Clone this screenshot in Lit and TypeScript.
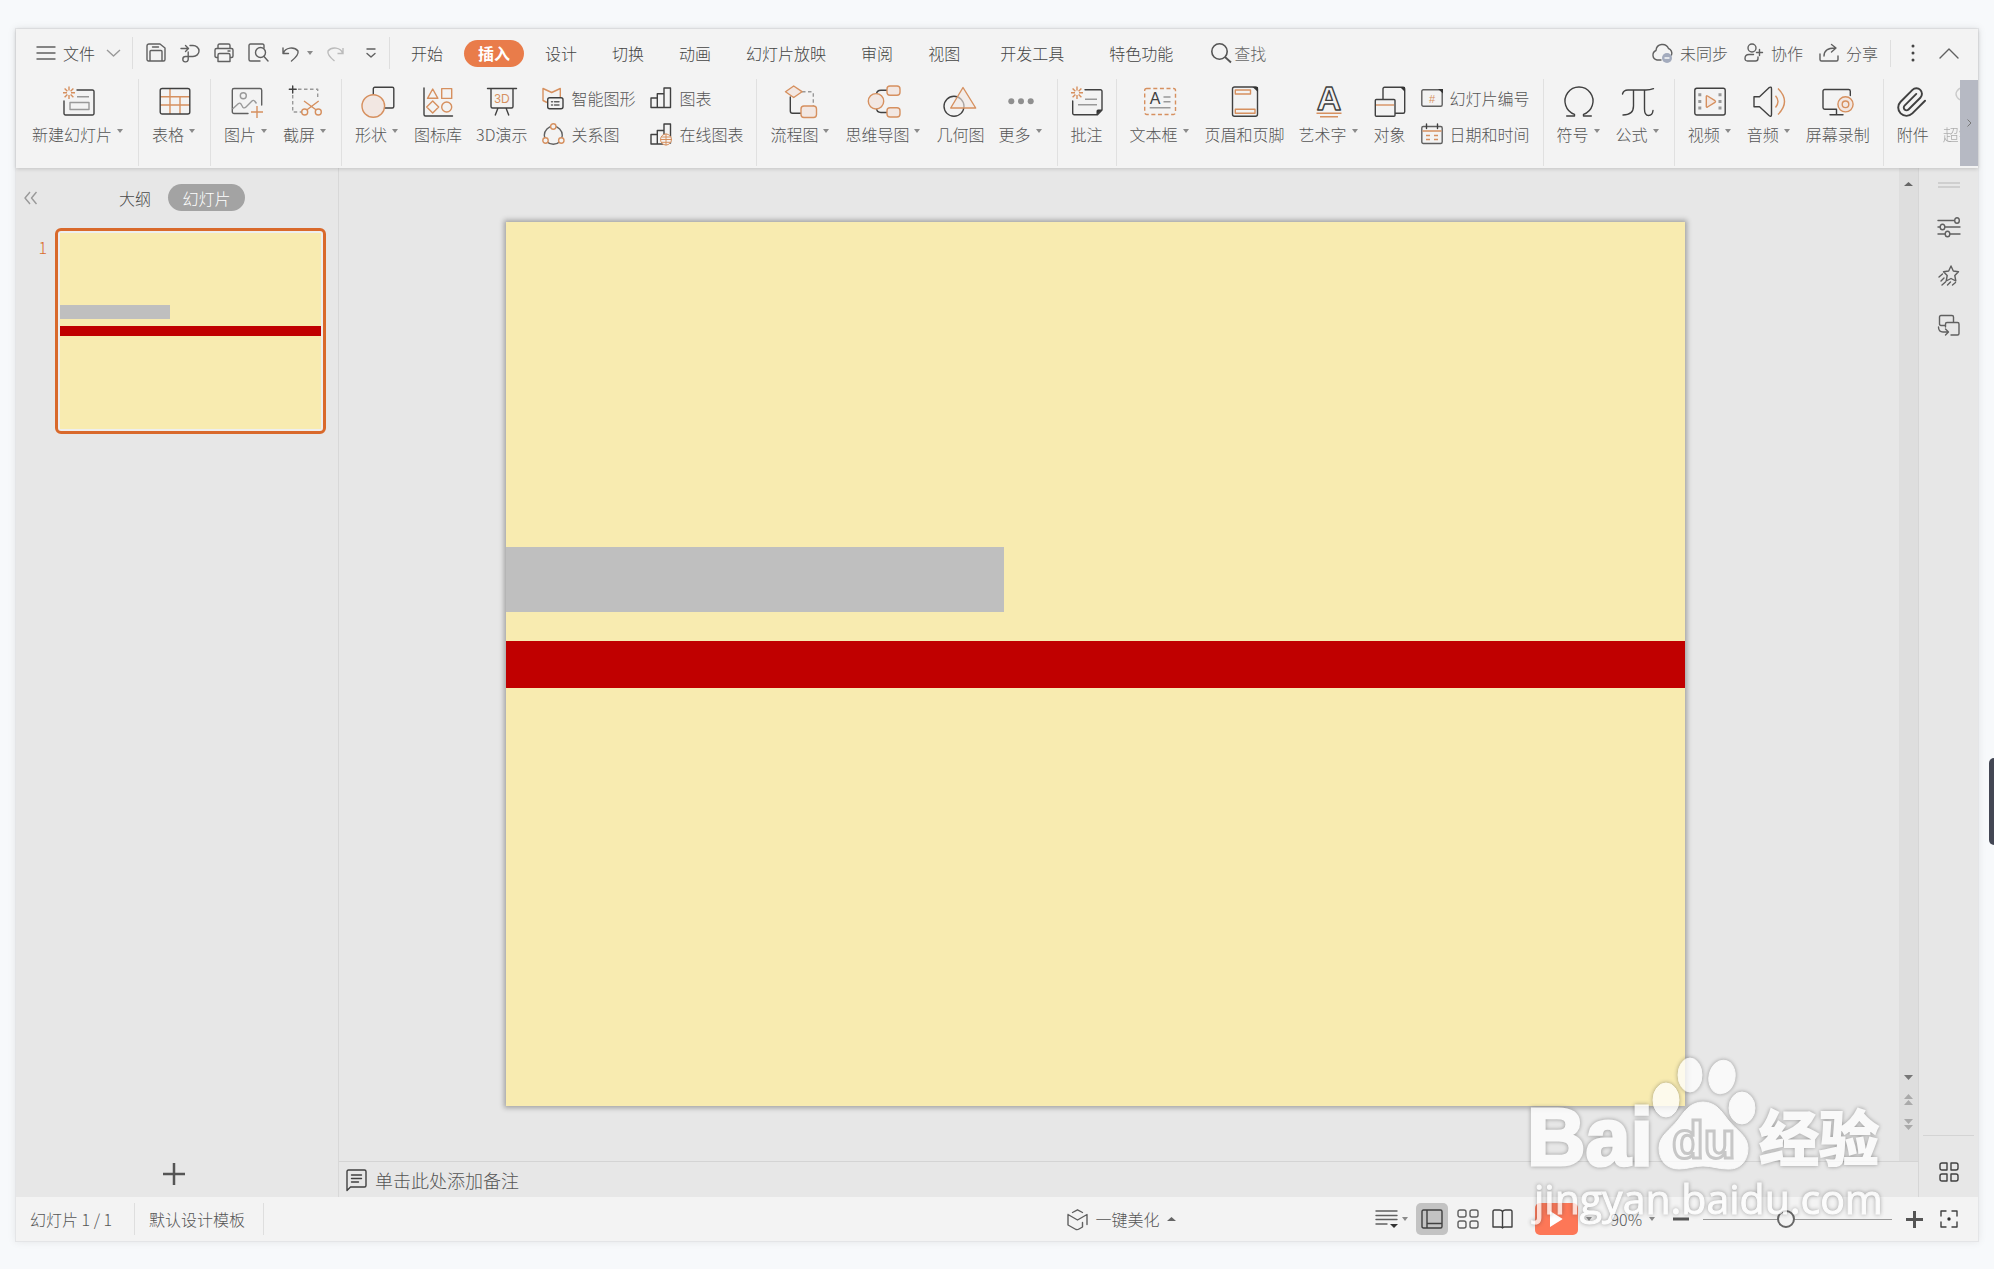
import { LitElement, html, svg, css, nothing } from "lit";
import { customElement, state } from "lit/decorators.js";
import { classMap } from "lit/directives/class-map.js";
import { styleMap } from "lit/directives/style-map.js";

interface Tool {
  icon: string;
  label: string;
  menu?: boolean;
  faded?: boolean;
}
type Entry = Tool | Tool[];

const burst = svg`<path class="o" d="M6 0.5v4M6 9v4M0 6.7h4M8 6.7h4M1.6 2.4l2.8 2.8M7.6 8.4l2.8 2.8M10.4 2.4L7.6 5.2M4.4 8.4l-2.8 2.8"/>`;

const icons: Record<string, unknown> = {
  newSlide: svg`<path class="d" d="M14 4H29.5A1.5 1.5 0 0 1 31 5.500V27.500A1.500 1.500 0 0 1 29.500 29H2.500A1.500 1.500 0 0 1 1 27.500V15"/><path class="g" d="M14 10.700H26M7 16.500H26V23.500H7Z"/>${burst}`,
  table: svg`<path class="o" d="M11 3V28M21 11V28M1 10.700H31M1 19H31"/><rect class="d" x="1.200" y="2.500" width="29.600" height="25.500" rx="2"/>`,
  picture: svg`<path class="s" d="M17 27.500H3A1.700 1.700 0 0 1 1.300 25.800V4.200A1.700 1.700 0 0 1 3 2.500H29A1.700 1.700 0 0 1 30.700 4.200V19"/><circle class="g" cx="12.300" cy="9.700" r="3"/><path class="g" d="M1.500 23L7.500 17.500Q9 16.500 10 18L12 21.500Q13.500 22.500 15 21L21 15Q22.500 13.500 24 15.500L25.500 17.500"/><path class="o" d="M26 20v12M20 26H32"/>`,
  screenshot: svg`<path class="g" stroke-dasharray="3.500 2.500" d="M8 3.300H27.700V13M2.700 9V26H12"/><path class="d" d="M2.700 0V7M-.700 3.300H6.200"/><g class="o"><circle cx="14.700" cy="26" r="3"/><circle cx="28.300" cy="26" r="3"/><path d="M14 15L26.300 24M28.700 15L16.700 24"/></g>`,
  shape: svg`<rect class="d" x="11.300" y="1.300" width="20.500" height="20.700" rx="1.500"/><circle class="of" cx="11.300" cy="20" r="11.300"/>`,
  library: svg`<path class="d" d="M2 2V28.500Q2 30 3.500 30H30.500"/><path class="o" d="M10.700 3L5.500 12.300H15.900ZM19.700 2.600H29.700V12.400H19.700ZM10.700 15L16.700 21L10.700 27L4.700 21Z"/><circle class="o" cx="24.700" cy="21" r="5"/>`,
  three: svg`<path class="d" d="M1.500 2.500H30.500M5 2.500V20.500Q5 22 6.500 22H25.500Q27 22 27 20.500V2.500M12 22L9.300 29M20 22L22.700 29"/><text class="ot" x="16" y="16.500" font-size="12">3D</text>`,
  smart: svg`<path class="o" d="M5 15.500L1 13.500V1.500L9.700 5.500L18.300 1.500V10"/><rect class="db" x="5.700" y="10.700" width="15.300" height="11" rx="2"/><path class="s" d="M9.500 14.700h1M12.500 14.700h4.500M9.500 18h1M12.500 18h4.500"/>`,
  relation: svg`<circle class="s" cx="11.300" cy="12.300" r="9"/><g class="ob"><circle cx="11.300" cy="3.500" r="2.700"/><circle cx="3.500" cy="17.500" r="2.700"/><circle cx="19.300" cy="17.500" r="2.700"/></g>`,
  chart: svg`<path class="d" d="M1 11H7.300V20.500H1ZM7.300 6.700H14V20.500H7.300ZM14 1H20.500V20.500H14Z"/>`,
  online: svg`<path class="d" d="M1 11.500H7.300V21H1ZM7.300 7.500H14V21H7.300ZM14 1H20.500V20H14Z"/><g class="ob thin"><circle cx="16" cy="16.500" r="5.500"/><path d="M10.500 16.500H21.500M16 11V22M11.500 14H20.500M11.500 19.300H20.500"/></g>`,
  flow: svg`<path class="g" stroke-dasharray="3.500 2.500" d="M17 5.700H27Q28.300 5.700 28.300 7V20"/><path class="d" d="M5.300 11V25Q5.300 27.300 7.500 27.300H16"/><path class="of" d="M8.700 0L17 5.700L8.700 11.500L.5 5.700Z"/><rect class="of" x="16" y="20" width="15.500" height="11.500" rx="3"/>`,
  mind: svg`<path class="d" d="M8.500 8.500Q8.500 4.300 13 4.300H19.500M8.500 22Q8.500 26.500 13 26.500H19.500"/><circle class="of" cx="8" cy="15.300" r="7.700"/><rect class="of" x="19" y="0" width="13" height="9.300" rx="3"/><rect class="of" x="19" y="21.700" width="13" height="9.300" rx="3"/>`,
  geometry: svg`<circle class="d" cx="10" cy="20.300" r="10"/><path class="of" fill-opacity=".6" d="M19 1.500L6.700 22H31.700Z"/>`,
  more: svg`<g fill="#8f8f8f"><circle cx="6.300" cy="15.300" r="3"/><circle cx="16" cy="15.300" r="3"/><circle cx="25.700" cy="15.300" r="3"/></g>`,
  comment: svg`<path class="d" d="M14 3.700H29.500A1.500 1.500 0 0 1 31 5.200V24L26.500 28.700H3.200A1.500 1.500 0 0 1 1.700 27.200V15"/><path class="k" d="M31 23.500H27A1.500 1.500 0 0 0 25.500 25V29Z"/><path class="g" d="M14 13.300H26M7 18.700H26"/>${burst}`,
  textbox: svg`<rect class="o" stroke-dasharray="4 2.600" x=".700" y="2.500" width="30.800" height="26" rx="2"/><text class="dt" x="11" y="17.500" font-size="16">A</text><path class="g" d="M19.500 11H26.500M19.500 15.700H26.500M5.700 21.700H26.500"/>`,
  header: svg`<rect class="d" x="3.500" y="1" width="25" height="29.300" rx="2"/><path class="k" d="M23.500 1L29 6V1Z"/><path class="o" d="M6.300 4H21.500V8H6.300ZM6.300 23.300H26V27.300H6.300Z"/>`,
  wordart: svg`<text class="outlined" x="16" y="24" font-size="34">A</text><path class="o" d="M3.500 27.300H28.500M7 30.700H25"/>`,
  object: svg`<rect class="d" x="9" y="1.200" width="21.700" height="26" rx="1.500"/><path class="k" d="M26 1L31 6V1Z"/><rect class="db" x="1.300" y="13.500" width="19.700" height="16.800" rx="1"/><path class="o" d="M2 19H20"/>`,
  number: svg`<rect class="s" x=".800" y="2.800" width="20.400" height="16.500" rx="1.500"/><path class="k" d="M17 2L22 6.500V2Z"/><text class="ot" x="11" y="15.500" font-size="11">#</text>`,
  date: svg`<rect class="s" x=".800" y="3.500" width="20.400" height="17" rx="1.500"/><path class="d" d="M5.500 1V5.500M16.500 1V5.500"/><path class="o" d="M1.500 8H20.500M5 12.500h4M13 12.500h4M5 16.500h4M13 16.500h4"/>`,
  omega: svg`<path class="d" d="M3.700 30H11.500V28.300A14 14 0 1 1 20.500 28.300V30H28.300"/>`,
  pi: svg`<path class="d" d="M.5 8Q1.500 4 6 4H24Q28 4 31.500 2.700M11.500 4V20Q11.500 29 1 29M22.500 4V23Q22.500 29.500 26.500 29.500T31 24.500"/>`,
  video: svg`<rect class="d" x=".800" y="2.300" width="30.400" height="26.700" rx="2"/><path class="g" stroke-width="3" stroke-dasharray="3 3.700" d="M5.800 7.200V24M26 7.200V24"/><path class="of" d="M12.300 10.500Q12.300 9.300 13.500 10L21 14.700Q22 15.500 21 16.300L13.500 21Q12.300 21.600 12.300 20.500Z"/>`,
  audio: svg`<path class="d" d="M1 10.700H6.500L16 1.700Q18.500 0 18.500 3V28.500Q18.500 31.500 16 29.500L6.500 20.700H1Z"/><path class="o" d="M22.500 9.700Q27.500 15.500 22.500 21.500M25 2.500Q38 15.500 25 28.500"/>`,
  record: svg`<path class="d" d="M14 23.300H2.700A1.700 1.700 0 0 1 1 21.600V5.200A1.700 1.700 0 0 1 2.700 3.500H26.600A1.700 1.700 0 0 1 28.300 5.200V9.500M14.500 23.300V28.700M8 28.700H21"/><circle class="of" cx="23.500" cy="18.300" r="7.600"/><circle class="o" cx="23.500" cy="18.300" r="3.300"/>`,
  clip: svg`<path class="d" transform="translate(-1.500 -.5) scale(1.380)" d="M21.400 11.050l-9.190 9.190a6 6 0 0 1-8.490-8.490l8.570-8.570A4 4 0 1 1 18 8.840l-8.590 8.570a2 2 0 0 1-2.830-2.830l8.490-8.480"/>`,
  link: svg`<path class="g" d="M9 2Q1 8 9 14"/>`,
};

const groups: Entry[][] = [
  [{ icon: "newSlide", label: "新建幻灯片", menu: true }],
  [{ icon: "table", label: "表格", menu: true }],
  [
    { icon: "picture", label: "图片", menu: true },
    { icon: "screenshot", label: "截屏", menu: true },
  ],
  [
    { icon: "shape", label: "形状", menu: true },
    { icon: "library", label: "图标库" },
    { icon: "three", label: "3D演示" },
    [
      { icon: "smart", label: "智能图形" },
      { icon: "relation", label: "关系图" },
    ],
    [
      { icon: "chart", label: "图表" },
      { icon: "online", label: "在线图表" },
    ],
  ],
  [
    { icon: "flow", label: "流程图", menu: true },
    { icon: "mind", label: "思维导图", menu: true },
    { icon: "geometry", label: "几何图" },
    { icon: "more", label: "更多", menu: true },
  ],
  [{ icon: "comment", label: "批注" }],
  [
    { icon: "textbox", label: "文本框", menu: true },
    { icon: "header", label: "页眉和页脚" },
    { icon: "wordart", label: "艺术字", menu: true },
    { icon: "object", label: "对象" },
    [
      { icon: "number", label: "幻灯片编号" },
      { icon: "date", label: "日期和时间" },
    ],
  ],
  [
    { icon: "omega", label: "符号", menu: true },
    { icon: "pi", label: "公式", menu: true },
  ],
  [
    { icon: "video", label: "视频", menu: true },
    { icon: "audio", label: "音频", menu: true },
    { icon: "record", label: "屏幕录制" },
  ],
  [
    { icon: "clip", label: "附件" },
    { icon: "link", label: "超链接", faded: true },
  ],
];

const tabs = ["开始", "插入", "设计", "切换", "动画", "幻灯片放映", "审阅", "视图", "开发工具", "特色功能"];

/* Shapes on the slide, in percent of its width and height. */
const shapes = [
  { color: "#bfbfbf", top: 36.8, width: 42.2, height: 7.3 },
  { color: "#c00000", top: 47.4, width: 100, height: 5.3 },
];

@customElement("app-root")
export class AppRoot extends LitElement {
  @state() private tab = "插入";
  @state() private zoom = 43;

  static styles = css`
    :host {
      display: grid;
      position: relative;
      box-sizing: border-box;
      min-height: 100vh;
      padding: 28px 15px 27px;
      background: #f7f9fb;
      color: #555;
      font: 300 16px/20px "Noto Sans CJK SC", sans-serif;
    }
    * { box-sizing: border-box; }
    button, input {
      font: inherit;
      color: inherit;
      background: none;
      border: 0;
      padding: 0;
      margin: 0;
      white-space: nowrap;
    }
    button { cursor: pointer; display: inline-flex; align-items: center; justify-content: center; flex: none; }
    svg { display: block; flex: none; overflow: visible; }
    .d, .s, .g, .o, .of, .ob, .db { fill: none; stroke-width: 1.4px; stroke-linejoin: round; stroke-linecap: round; }
    .d { stroke: #404040; }
    .db { stroke: #404040; fill: #f3f3f3; }
    .s { stroke: #606060; }
    .g { stroke: #999; stroke-linecap: butt; }
    .g[stroke-width] { stroke-width: 3px; }
    .o { stroke: #d6905f; stroke-linecap: butt; }
    .of { stroke: #d6905f; fill: #f2e7e2; }
    .ob { stroke: #d6905f; fill: #f3f3f3; }
    .thin { stroke-width: 1px; }
    .k { fill: #333; }
    .ot, .dt, .outlined { font-family: "Liberation Sans", sans-serif; font-weight: 400; text-anchor: middle; }
    .ot { fill: #d6905f; }
    .dt { fill: #404040; }
    .outlined { font-weight: 700; fill: #f3f3f3; stroke: #404040; stroke-width: 1.4px; stroke-linejoin: round; }

    .window {
      display: grid;
      grid-template-rows: auto 1fr auto;
      min-width: 0;
      background: #e7e7e7;
      border: 1px solid #e4e5e7;
      box-shadow: 0 0 8px rgba(0, 0, 0, 0.08);
    }
    .head { background: #f3f3f3; box-shadow: 0 1px 4px rgba(0, 0, 0, 0.16); position: relative; min-width: 0; }
    .bar { display: flex; align-items: center; height: 50px; padding: 0 19px 2px 20px; color: #444; }
    .rule { width: 1px; height: 32px; background: #dedede; flex: none; }
    .file { gap: 7px; margin-right: 12px; }
    .file .chev { margin-left: 5px; }
    .quick { display: flex; align-items: center; gap: 14px; margin: 0 13px; }
    .undo { gap: 7px; }
    .late { margin-left: 8px; }
    .tabs { display: flex; align-items: center; gap: 1px; margin-left: 4px; }
    .tab { height: 27px; padding: 0 17px; }
    .tab.wide { padding: 0 22px; }
    .tab.on { margin: 0 3px; padding: 0 14px; border-radius: 14px; background: #e97c4a; color: #fff; font-weight: 700; }
    .find { gap: 3px; margin-left: 16px; color: #666; }
    .account { display: flex; align-items: center; gap: 16px; margin-left: auto; }
    .account button { gap: 7px; color: #555; }
    .account .rule { height: 27px; margin: 0 4px 0 -4px; }
    .account .last { margin-left: 8px; }

    .ribbon { display: flex; padding-bottom: 2px; min-width: 0; }
    .groups { display: flex; flex: 1 1 0; min-width: 0; overflow: hidden; padding-left: 3px; }
    .group { display: flex; flex: none; height: 87px; padding: 7px 6px 0; border-right: 1px solid #e0e0e0; }
    .group:last-child { border: 0; }
    .tool { flex-direction: column; justify-content: flex-start; gap: 6px; padding: 0 7px; height: 60px; }
    .tool .name { display: flex; align-items: center; gap: 5px; }
    .name .arrow { margin-right: 2px; margin-bottom: 6px; }
    .faded { opacity: 0.45; }
    .stack { display: flex; flex-direction: column; gap: 14px; padding: 1px 7px 0 8px; align-items: flex-start; }
    .stack button { gap: 7px; height: 22px; }
    .next { width: 18px; height: 86px; margin-top: 1px; background: #b6b9c3; color: #777; }

    .body { display: grid; grid-template-columns: 323px 1fr 59px; min-height: 0; }
    .panel { display: flex; flex-direction: column; border-right: 1px solid #d8d8d8; padding: 16px 12px 12px 8px; }
    .panel-head { display: flex; align-items: center; height: 27px; margin-bottom: 17px; color: #4a4a4a; }
    .panel-head .outline { margin-left: 82px; margin-right: 17px; }
    .pill { height: 27px; width: 77px; border-radius: 14px; background: #a3a3a3; color: #fff; }
    .row { display: grid; grid-template-columns: 31px 1fr; }
    .idx { color: #d96b2b; padding: 9px 8px 0 0; text-align: right; font-size: 16px; }
    .thumb { display: block; height: 206px; padding: 2px; border: 3px solid #d9692b; border-radius: 6px; background: #eee; }
    .slide { position: relative; background: #f8ebb0; }
    .thumb .slide { display: block; height: 100%; }
    .block { position: absolute; left: 0; }
    .add { margin: auto auto 0; padding-right: 2px; }

    .work { display: grid; grid-template-rows: 1fr 36px; min-width: 0; }
    .stage { display: flex; min-height: 0; }
    .canvas { display: flex; flex: 1; padding: 54px 214px 55px 167px; }
    .canvas .slide { flex: 1; box-shadow: 0 0 5px 2px rgba(0, 0, 0, 0.3); }
    .scroll { width: 20px; background: #dedede; display: flex; flex-direction: column; align-items: center; padding: 14px 0 31px; gap: 14px; border-right: 1px solid #d6d6d6; }
    .scroll .down { margin-top: auto; }
    .notes { display: flex; align-items: center; gap: 8px; padding: 0 7px; border-top: 1px solid #d4d4d4; border-right: 1px solid #d6d6d6; }
    .notes input { flex: 1; height: 30px; font-size: 18px; outline: none; }
    .notes input::placeholder { color: #555; opacity: 1; }
    .rail { display: flex; flex-direction: column; align-items: center; gap: 28px; padding: 14px 0 15px; }
    .grip { width: 22px; height: 6px; border: solid #cfcfcf; border-width: 2px 0; margin-bottom: 1px; }
    .rail-end { margin-top: auto; align-self: stretch; margin-left: 4px; margin-right: 4px; padding-top: 26px; border-top: 1px solid #d4d4d4; display: flex; justify-content: center; }

    .status { display: flex; align-items: center; height: 44px; padding: 0 20px 0 14px; background: #f3f3f3; color: #555; min-width: 0; }
    .status .tpl { margin: 0 18px 0 14px; }
    .status .page { margin-right: 22px; }
    .beauty { gap: 8px; margin-left: auto; }
    .beauty .arrow { margin-left: -1px; }
    .views { display: flex; align-items: center; margin-left: 200px; }
    .lines { gap: 4px; margin-right: 8px; }
    .view { width: 32px; height: 32px; border-radius: 5px; margin-right: 3px; }
    .view.on { background: #c3c3c3; margin-right: 4px; }
    .play { width: 43px; height: 32px; border-radius: 5px; background: #fd7757; margin: 0 8px 0 13px; }
    .percent { gap: 7px; margin: 0 18px 0 19px; }
    .range { appearance: none; width: 189px; height: 18px; margin: 0 14px; outline: none; }
    .range::-webkit-slider-runnable-track { height: 18px; background: linear-gradient(#999, #999) center / 100% 1px no-repeat; }
    .range::-webkit-slider-thumb { appearance: none; width: 18px; height: 18px; border: 2px solid #666; border-radius: 50%; background: #f3f3f3; }
    .fit { margin-left: 17px; }

    .handle { position: absolute; right: 0; top: 758px; width: 5px; height: 87px; border-radius: 5px 0 0 5px; background: #434754; }
    .mark { position: absolute; right: 94px; bottom: 34px; pointer-events: none; opacity: 0.76; fill: #fff; stroke: #fff; stroke-width: 1px; filter: drop-shadow(0 0 2px rgba(60, 60, 60, 0.6)); }
    .brand { font: 700 81px "Liberation Sans", sans-serif; stroke-width: 3px; }
    .brand-du { font: 700 52px "Liberation Sans", sans-serif; fill: #fff; stroke: #bdbdbd; stroke-width: 3px; }
    .brand-cn { font: 700 60px "Noto Sans CJK SC", sans-serif; stroke-width: 2px; }
    .site { font: 400 41px "Open Sans", sans-serif; }
  `;

  private glyph(name: string, size: number) {
    return html`<svg width=${size} height=${size} viewBox="0 0 ${size} ${size}" aria-hidden="true">${icons[name]}</svg>`;
  }

  private arrow(up = false, w = 6) {
    return html`<svg class="arrow" width=${w} height="4" viewBox="0 0 6 4" preserveAspectRatio="none" aria-hidden="true">
      <path fill=${up ? "#666" : "#8a8a8a"} d=${up ? "M3 0L6 4H0Z" : "M0 0H6L3 4Z"} />
    </svg>`;
  }

  private tool(t: Tool) {
    return html`<button class=${classMap({ tool: true, faded: !!t.faded })}>
      ${this.glyph(t.icon, 32)}<span class="name">${t.label}${t.menu ? this.arrow() : nothing}</span>
    </button>`;
  }

  private entry(e: Entry) {
    return Array.isArray(e)
      ? html`<div class="stack">${e.map((t) => html`<button>${this.glyph(t.icon, 22)}${t.label}</button>`)}</div>`
      : this.tool(e);
  }

  private slide() {
    return html`<span class="slide">${shapes.map(
      (s) => html`<span class="block" style=${styleMap({
        background: s.color,
        top: `${s.top}%`,
        width: `${s.width}%`,
        height: `${s.height}%`,
      })}></span>`
    )}</span>`;
  }

  private renderBar() {
    return html`<div class="bar">
      <button class="file">
        <svg width="20" height="14"><path class="s" d="M1 1H19M1 7H19M1 13H19" /></svg>文件
        <svg class="chev" width="13" height="8"><path class="g" d="M0 1L6.500 7L13 1" /></svg>
      </button>
      <span class="rule"></span>
      <div class="quick">
        <button aria-label="保存"><svg width="20" height="20"><path class="s" d="M3 1H14L19 5V16.500A1.500 1.500 0 0 1 17.500 18H2.500A1.500 1.500 0 0 1 1 16.500V3A2 2 0 0 1 3 1ZM4 18V8.500Q4 7.500 5 7.500H15Q16 7.500 16 8.500V18M6.500 4H12.500" /></svg></button>
        <button aria-label="输出为PDF"><svg width="20" height="20"><path class="s" d="M1 5.500H8M5.500 2.500L8.500 5.500L5.500 8.500M10 2.500H13A6 5.500 0 0 1 13 13.500H5.500A2.700 2.700 0 1 0 8.200 16.500V9" /></svg></button>
        <button aria-label="打印"><svg width="20" height="20"><path class="s" d="M4 5.500V2.500Q4 1 5.500 1H14.500Q16 1 16 2.500V5.500M4 14.500H2.500Q1 14.500 1 13V7Q1 5.500 2.500 5.500H17.500Q19 5.500 19 7V13Q19 14.500 17.500 14.500H16M5.500 10.500H14.500Q16 10.500 16 12V18.500H4V12Q4 10.500 5.500 10.500ZM14 8H16" /></svg></button>
        <button aria-label="打印预览"><svg width="20" height="20"><path class="s" d="M16 5V2.500Q16 1 14.500 1H2.500Q1 1 1 2.500V16.500Q1 18 2.500 18H12M16 13.500L20 18" /><circle class="s" cx="12.500" cy="9.500" r="5" /></svg></button>
        <button class="undo" aria-label="撤销"><svg width="18" height="20"><path class="s" d="M1 5V10.500H6.500M1.500 10A8 6.500 0 0 1 16 8Q17 12 9.500 18" /></svg>${this.arrow()}</button>
        <button aria-label="恢复"><svg width="17" height="20"><path fill="none" stroke="#bbb" stroke-width="1.400" d="M16 5V10.500H10.500M15.500 10A8 6.500 0 0 0 1 8Q0 12 7.500 18" /></svg></button>
        <button class="late" aria-label="自定义快速访问工具栏"><svg width="10" height="11"><path class="s" d="M1 1H9M1 5.500L5 9L9 5.500" /></svg></button>
      </div>
      <span class="rule"></span>
      <nav class="tabs">
        ${tabs.map((t) => html`<button class=${classMap({ tab: true, on: t === this.tab, wide: t.length === 4 })} @click=${() => (this.tab = t)}>${t}</button>`)}
      </nav>
      <button class="find"><svg width="20" height="20"><circle fill="none" stroke="#555" stroke-width="1.600" cx="8.500" cy="8.500" r="7.700" /><path fill="none" stroke="#555" stroke-width="1.800" d="M14 14L20 19.500" /></svg>查找</button>
      <div class="account">
        <button><svg width="22" height="20"><path class="s" d="M10 17H6A5 5 0 0 1 5 7.500A6.500 6.500 0 0 1 17.500 5.500A5 5 0 0 1 20.500 12" /><circle cx="16" cy="15" r="5" fill="#a3abbd" /><path stroke="#fff" stroke-width="1.400" d="M13.500 15H18.500" /></svg>未同步</button>
        <button><svg width="20" height="20"><circle class="s" cx="8" cy="5" r="4" /><path class="s" d="M14 14V15.500Q14 18 11.500 18H3.500Q1 18 1 15.500Q1 11.500 5 11.500H9.500M12.500 9.500H18.500M15.500 6.500V12.500" /></svg>协作</button>
        <button><svg width="20" height="20"><path class="s" d="M1 11V16.500Q1 18 2.500 18H17.500Q19 18 19 16.500V13M5 13Q5 5 16 5M12.500 1.500L17 5L12.500 9" /></svg>分享</button>
        <span class="rule"></span>
        <button aria-label="更多选项"><svg width="4" height="18"><g fill="#444"><circle cx="2" cy="2" r="1.500" /><circle cx="2" cy="9" r="1.500" /><circle cx="2" cy="16" r="1.500" /></g></svg></button>
        <button class="last" aria-label="收起功能区"><svg width="20" height="11"><path class="s" d="M1 10L10 1L19 10" /></svg></button>
      </div>
    </div>`;
  }

  private renderRail() {
    return html`<aside class="rail">
      <span class="grip"></span>
      <button aria-label="对象属性"><svg width="22" height="20"><path class="s" d="M0 3.500H16M0 10H2M7 10H22M0 17H7M12 17H22" /><g class="s"><ellipse cx="19" cy="3.500" rx="2.300" ry="2.800" /><ellipse cx="4.500" cy="10" rx="2.300" ry="2.800" /><ellipse cx="9.500" cy="17" rx="2.300" ry="2.800" /></g></svg></button>
      <button aria-label="自定义动画"><svg width="22" height="22"><path class="s" d="M13 1L15.300 6L20.500 6.700L16.800 10.500L17.800 16L13 13.500L8.200 16L9.200 10.500L5.500 6.700L10.700 6ZM1 12L4.500 9M3 16L6 13M4 20L7.500 17M9.500 20L12.500 17M14.500 20L17.500 17.500" /></svg></button>
      <button aria-label="切换窗格"><svg width="22" height="20"><path class="s" d="M7 10.500H3Q1.500 10.500 1.500 9V2Q1.500 .5 3 .5H14Q15.500 .5 15.500 2V7.500M7.500 12V9Q7.500 7.500 9 7.500H19.500Q21 7.500 21 9V18.500Q21 20 19.500 20H13M.5 12Q.5 17 5 17H10M7.500 14L10.500 17L7.500 20" /></svg></button>
      <div class="rail-end"><button aria-label="应用"><svg width="20" height="20"><g class="d"><path d="M3 1H8V8H3Q1 8 1 6V3Q1 1 3 1ZM12 1H17Q19 1 19 3V6Q19 8 17 8H12ZM3 12H8V19H3Q1 19 1 17V14Q1 12 3 12ZM12 12H17Q19 12 19 14V17Q19 19 17 19H12Z" /></g></svg></button></div>
    </aside>`;
  }

  private renderStatus() {
    return html`<footer class="status">
      <span class="page">幻灯片 1 / 1</span><span class="rule"></span>
      <span class="tpl">默认设计模板</span><span class="rule"></span>
      <button class="beauty"><svg width="21" height="21"><path class="s" d="M5.500 3.500L10.500 .8L15.500 3.500M1 5.500V16L9 20.500Q10.500 21 12 20L15.500 18V13.500M1 5.500L10.500 11L20 5.500V15.500" /></svg>一键美化${this.arrow(true, 9)}</button>
      <div class="views">
        <button class="lines" aria-label="备注"><svg width="22" height="18"><path class="s" d="M0 1H21M0 5.500H21M0 9.500H21M0 14H11" /><path class="k" d="M14 14H22L18 18Z" /></svg>${this.arrow()}</button>
        <button class="view on" aria-label="普通视图"><svg width="22" height="20"><path class="d" d="M2.500 1H19.500Q21 1 21 2.500V17.500Q21 19 19.500 19H2.500Q1 19 1 17.500V2.500Q1 1 2.500 1ZM6 1V19M6 14.500H21" /></svg></button>
        <button class="view" aria-label="幻灯片浏览"><svg width="22" height="20"><g class="s"><rect x="1" y="1" width="8" height="7" rx="2" /><rect x="13" y="1" width="8" height="7" rx="2" /><rect x="1" y="12" width="8" height="7" rx="2" /><rect x="13" y="12" width="8" height="7" rx="2" /></g></svg></button>
        <button class="view" aria-label="阅读视图"><svg width="21" height="20"><path class="d" d="M10.500 2.500Q9.500 1 7.500 1H2.500Q1 1 1 2.500V18H8.500Q10 18 10.500 19Q11 18 12.500 18H20V2.500Q20 1 18.500 1H13.500Q11.500 1 10.500 2.500V19" /></svg></button>
      </div>
      <button class="play" aria-label="从当前幻灯片开始播放"><svg width="14" height="18"><path fill="#fff" d="M1 1L13 8.500Q14 9 13 9.500L1 17Z" /></svg></button>
      ${this.arrow()}
      <button class="percent">90%${this.arrow()}</button>
      <button aria-label="缩小"><svg width="16" height="4"><path fill="#555" d="M0 .5H16V3.500H0Z" /></svg></button>
      <input class="range" type="range" aria-label="显示比例" min="0" max="100" .value=${String(this.zoom)} @input=${(e: Event) => (this.zoom = Number((e.target as HTMLInputElement).value))} />
      <button aria-label="放大"><svg width="17" height="17"><path stroke="#555" stroke-width="3" d="M0 8.500H17M8.500 0V17" /></svg></button>
      <button class="fit" aria-label="最佳显示比例"><svg width="18" height="18"><path class="d" d="M1 6V1H6M12 1H17V6M17 12V17H12M6 17H1V12" /><circle class="k" cx="9" cy="9" r="1.700" /></svg></button>
    </footer>`;
  }

  render() {
    return html`
      <div class="window">
        <header class="head">
          ${this.renderBar()}
          <div class="ribbon">
            <div class="groups">${groups.map((g) => html`<div class="group">${g.map((e) => this.entry(e))}</div>`)}</div>
            <button class="next" aria-label="向右滚动"><svg width="5" height="8"><path fill="none" stroke="#777" d="M.5 .5L4 4L.5 7.500" /></svg></button>
          </div>
        </header>
        <div class="body">
          <aside class="panel">
            <div class="panel-head">
              <button aria-label="折叠"><svg width="13" height="12"><path class="g" d="M6 0L1 6L6 12M12.500 0L7.500 6L12.500 12" /></svg></button>
              <button class="outline">大纲</button><button class="pill">幻灯片</button>
            </div>
            <div class="row"><span class="idx">1</span><button class="thumb" aria-label="幻灯片 1">${this.slide()}</button></div>
            <button class="add" aria-label="新建幻灯片"><svg width="22" height="22"><path stroke="#555" stroke-width="2.500" d="M0 11H22M11 0V22" /></svg></button>
          </aside>
          <main class="work">
            <div class="stage">
              <div class="canvas">${this.slide()}</div>
              <div class="scroll">
                ${this.arrow(true, 9)}
                <svg class="down" width="9" height="5"><path fill="#777" d="M0 0H9L4.500 5Z" /></svg>
                <svg width="9" height="11"><path fill="#aaa" d="M4.500 0L9 5H0ZM4.500 6L9 11H0Z" /></svg>
                <svg width="9" height="11"><path fill="#aaa" d="M0 0H9L4.500 5ZM0 6H9L4.500 11Z" /></svg>
              </div>
            </div>
            <div class="notes">
              <svg width="21" height="22"><path class="d" d="M1 21.500V2.500Q1 1 2.500 1H18.500Q20 1 20 2.500V16.500Q20 18 18.500 18H4.500ZM5.500 6H15.500M5.500 9.500H15.500M5.500 13H12.500" /></svg>
              <input type="text" aria-label="备注" placeholder="单击此处添加备注" />
            </div>
          </main>
          ${this.renderRail()}
        </div>
        ${this.renderStatus()}
      </div>
      <span class="handle"></span>
      <svg class="mark" width="380" height="185" viewBox="0 0 380 185">
        <ellipse cx="146" cy="50" rx="13" ry="17" />
        <ellipse cx="170" cy="25" rx="12" ry="17" />
        <ellipse cx="202" cy="27" rx="13" ry="17" transform="rotate(12 202 27)" />
        <ellipse cx="222" cy="58" rx="13" ry="16" />
        <path d="M183 52C196 52 202 62 208 70C216 80 228 86 228 98C228 112 219 120 207 119C198 119 192 116 183 116C174 116 168 119 159 119C147 119 139 111 139 98C139 86 150 80 158 70C164 62 170 52 183 52Z" />
        <text class="brand" x="7" y="115">Bai</text>
        <text class="brand-du" x="152" y="108">du</text>
        <text class="brand-cn" x="239" y="111">经验</text>
        <text class="site" x="14" y="164">jingyan.baidu.com</text>
      </svg>
    `;
  }
}
